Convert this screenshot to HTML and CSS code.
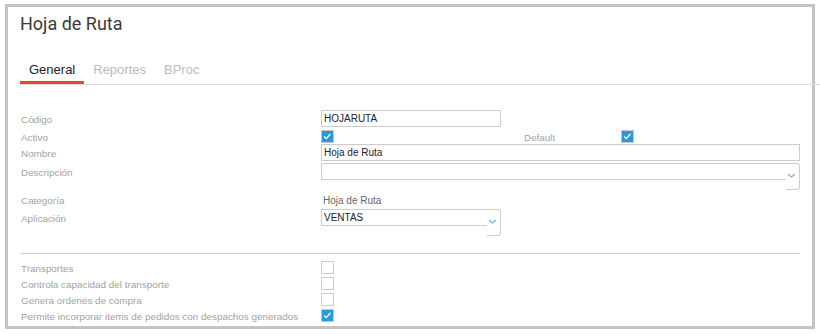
FILE: index.html
```html
<!DOCTYPE html>
<html>

<head>
  <meta charset="UTF-8">
  <meta name="viewport" content="width=device-width, initial-scale=1">
  <title>Hoja de Ruta</title>
  <link rel="stylesheet" href="styles.css">
</head>

<body>
  <div class="window">
    <h1 class="title">Hoja de Ruta</h1>
    <div class="tabs">
      <div class="tab active">General</div>
      <div class="tab">Reportes</div>
      <div class="tab">BProc</div>
    </div>

    <div class="form">
      <div class="row row-input">
        <label class="lbl">Código</label>
        <div class="field"><div class="input short">HOJARUTA</div></div>
      </div>
      <div class="row row-check">
        <label class="lbl lbl-check">Activo</label>
        <div class="field split">
          <span class="cb checked"><svg viewBox="0 0 13 13"><polyline points="2.5,6.5 5,9 10,3.5" /></svg></span>
          <span class="lbl lbl-check">Default</span>
          <span class="cb checked"><svg viewBox="0 0 13 13"><polyline points="2.5,6.5 5,9 10,3.5" /></svg></span>
        </div>
      </div>
      <div class="row row-name">
        <label class="lbl">Nombre</label>
        <div class="field"><div class="input">Hoja de Ruta</div></div>
      </div>
      <div class="row row-desc">
        <label class="lbl">Descripción</label>
        <div class="field">
          <div class="combo">
            <div class="combo-main"></div>
            <div class="combo-tail"><svg viewBox="0 0 9 5"><polyline points="1,1 4.5,4 8,1" /></svg></div>
          </div>
        </div>
      </div>
      <div class="row row-cat">
        <label class="lbl">Categoría</label>
        <div class="field"><span class="value">Hoja de Ruta</span></div>
      </div>
      <div class="row row-app">
        <label class="lbl">Aplicación</label>
        <div class="field">
          <div class="combo short">
            <div class="combo-main">VENTAS</div>
            <div class="combo-tail"><svg viewBox="0 0 9 5"><polyline points="1,1 4.5,4 8,1" /></svg></div>
          </div>
        </div>
      </div>

      <hr class="sep" />

      <div class="row row-flag">
        <label class="lbl lbl-check">Transportes</label>
        <div class="field"><span class="cb"></span></div>
      </div>
      <div class="row row-flag">
        <label class="lbl lbl-check">Controla capacidad del transporte</label>
        <div class="field"><span class="cb"></span></div>
      </div>
      <div class="row row-flag">
        <label class="lbl lbl-check">Genera ordenes de compra</label>
        <div class="field"><span class="cb"></span></div>
      </div>
      <div class="row row-flag">
        <label class="lbl lbl-check">Permite incorporar items de pedidos con despachos generados</label>
        <div class="field"><span class="cb checked"><svg viewBox="0 0 13 13"><polyline points="2.5,6.5 5,9 10,3.5" /></svg></span></div>
      </div>
    </div>
  </div>
</body>

</html>
```

FILE: styles.css
```css
*{
  padding: 0;
  margin: 0;
  box-sizing: border-box;
}

body{
  font-family: "Liberation Sans", Arial, sans-serif;
  background: #fff;
}

.window{
  width: 810px;
  height: 325px;
  margin: 4px 0 0 5px;
  border: 3px solid #c4c4c4;
  background: #fff;
}

.title{
  margin: 6px 0 0 12px;
  font-family: Roboto, sans-serif;
  font-size: 18px;
  font-weight: normal;
  line-height: 22px;
  color: #3a3a3a;
}

.tabs{
  display: flex;
  margin: 27px -11px 0 12px;
  border-bottom: 1px solid #ddd;
}
.tab{
  padding: 0 9px 3px;
  font-size: 13px;
  line-height: 16px;
  color: #bbb;
  border-bottom: 3px solid transparent;
}
.tab.active{
  color: #222;
  border-bottom-color: #e8452c;
}

.form{
  margin-top: 25px;
  padding: 0 12px 0 13px;
}

.row{
  display: grid;
  grid-template-columns: 300px 1fr;
  align-items: start;
}
.row-input{ height: 20px; }
.row-check{ height: 14px; }
.row-name{ height: 19px; }
.row-desc{ height: 28px; }
.row-cat{ height: 18px; }
.row-app{ height: 26px; }
.row-flag{ height: 16px; }

.lbl{
  padding-top: 1px;
  font-size: 9.9px;
  line-height: 17px;
  color: #a2a2a2;
}
.lbl-check{
  line-height: 13px;
}

.field{
  display: flex;
}
.split{
  display: grid;
  grid-template-columns: 203px 97px auto;
}

.input{
  width: 100%;
  height: 17px;
  padding-left: 2px;
  border: 1px solid #ccc;
  font-size: 10px;
  line-height: 15px;
  color: #222;
}
.input.short{
  width: 180px;
}

.value{
  padding: 1px 0 0 2px;
  font-size: 10px;
  line-height: 17px;
  color: #666;
}

.combo{
  display: flex;
  width: 100%;
}
.combo.short{
  width: 180px;
}
.combo-main{
  flex: 1;
  height: 17px;
  padding-left: 2px;
  border: 1px solid #ccc;
  border-right: none;
  font-size: 10px;
  line-height: 15px;
  color: #222;
}
.combo-tail{
  width: 14px;
  height: 27px;
  border: 1px solid #ccc;
  border-left: none;
  border-radius: 0 3px 3px 0;
  padding: 9px 0 0 1px;
}
.combo-tail svg{
  display: block;
  width: 9px;
  height: 5px;
  fill: none;
  stroke: #7fb0e0;
  stroke-width: 1.3;
}

.cb{
  display: block;
  width: 13px;
  height: 13px;
  border: 1px solid #ccc;
  background: #fff;
}
.cb.checked{
  background: #2b98dd;
  border-color: #c6c6c6;
}
.cb svg{
  display: block;
  width: 11px;
  height: 11px;
  fill: none;
  stroke: #fff;
  stroke-width: 1.5;
}

.sep{
  height: 1px;
  margin: 18px 0 7px;
  border: none;
  background: #ccc;
}
```
